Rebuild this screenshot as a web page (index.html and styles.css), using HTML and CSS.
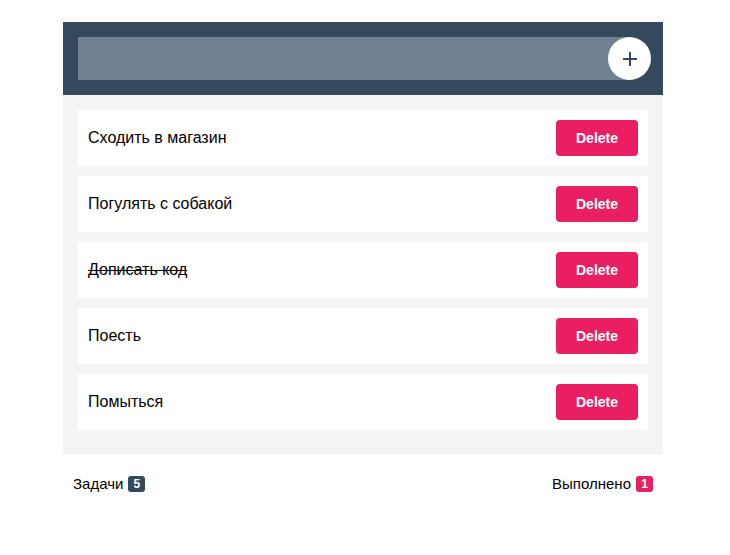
FILE: index.html
```html
<!DOCTYPE html>
<html lang="ru">
<head>
<meta charset="utf-8">
<title>Todo</title>
<link rel="stylesheet" href="styles.css">
</head>
<body>
<div class="app">
  <div class="header">
    <div class="add-row">
      <input class="add-input" type="text">
      <button class="add-btn" aria-label="Add">
        <svg width="18" height="18" viewBox="0 0 18 18"><path d="M9 2v14M2 9h14" stroke="#34495e" stroke-width="2" fill="none"/></svg>
      </button>
    </div>
  </div>
  <ul class="list">
    <li class="item"><span class="title">Сходить в магазин</span><button class="del">Delete</button></li>
    <li class="item"><span class="title">Погулять с собакой</span><button class="del">Delete</button></li>
    <li class="item done"><span class="title">Дописать код</span><button class="del">Delete</button></li>
    <li class="item"><span class="title">Поесть</span><button class="del">Delete</button></li>
    <li class="item"><span class="title">Помыться</span><button class="del">Delete</button></li>
  </ul>
  <div class="footer">
    <span class="stat">Задачи <span class="badge badge-dark">5</span></span>
    <span class="stat">Выполнено <span class="badge badge-pink">1</span></span>
  </div>
</div>
</body>
</html>
```
FILE: styles.css
```css
* { box-sizing: border-box; }
body {
  margin: 0;
  padding: 22px 0 0 63px;
  font-family: "Liberation Sans", Arial, sans-serif;
  background: #fff;
  color: #000;
}
.app { width: 600px; }
.header {
  background: #34495e;
  padding: 15px;
  height: 73px;
}
.add-row {
  position: relative;
  height: 43px;
}
.add-input {
  display: block;
  width: 552px;
  height: 43px;
  border: none;
  background: #708090;
  outline: none;
  padding: 0 10px;
}
.add-btn {
  position: absolute;
  right: -3px;
  top: 0;
  width: 43px;
  height: 43px;
  border-radius: 50%;
  border: none;
  background: #fff;
  padding: 0;
  display: flex;
  align-items: center;
  justify-content: center;
}
.list {
  list-style: none;
  margin: 0;
  padding: 15px 15px 25px;
  background: #f4f4f4;
  display: flex;
  flex-direction: column;
  gap: 10px;
}
.item {
  background: #fff;
  height: 56px;
  display: flex;
  align-items: center;
  justify-content: space-between;
  padding: 0 10px;
  font-size: 16px;
}
.done .title { text-decoration: line-through; }
.del {
  width: 82px;
  height: 36px;
  background: #e91e63;
  color: #fff;
  border: none;
  border-radius: 4px;
  font-family: "Liberation Sans", Arial, sans-serif;
  font-weight: bold;
  font-size: 14px;
  padding: 0;
}
.footer {
  display: flex;
  justify-content: space-between;
  padding: 20px 10px;
  font-size: 15px;
}
.stat { display: flex; align-items: center; gap: 5px; }
.badge {
  display: inline-flex;
  align-items: center;
  justify-content: center;
  min-width: 17px;
  height: 16px;
  padding: 0 4px;
  border-radius: 3px;
  color: #fff;
  font-size: 12px;
  font-weight: bold;
}
.badge-dark { background: #34495e; }
.badge-pink { background: #e91e63; }
```
